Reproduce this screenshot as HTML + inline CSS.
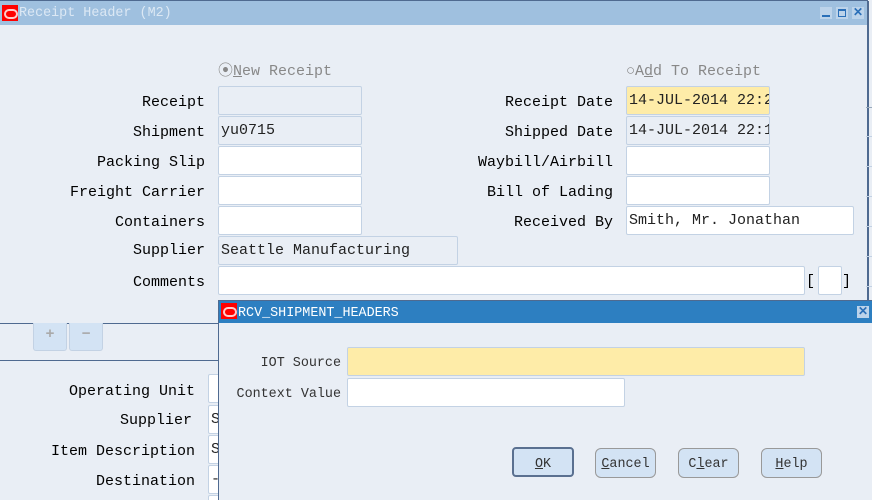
<!DOCTYPE html>
<html><head><meta charset="utf-8"><style>
*{margin:0;padding:0;box-sizing:border-box}
html,body{width:872px;height:500px;overflow:hidden}
body{background:#e9eef5;position:relative;font-family:"Liberation Mono","Noto Sans CJK SC",monospace;font-size:15px;color:#000}
.a{position:absolute}
.lbl{position:absolute;text-align:right;white-space:nowrap;line-height:16px}
.f{position:absolute;height:29px;background:#fff;border:1px solid #c3d2e4;border-radius:2px;padding:5px 2px;white-space:nowrap;overflow:hidden;line-height:18px;color:#222}
.g{background:#e9eef5}
.y{background:#feeca8}
.d{font-size:13.4px}
.btn{position:absolute;height:30px;background:#d3e3f4;border:1px solid #8fa0b8;border-radius:6px;text-align:center;line-height:32px;color:#333;font-size:13.4px}
.ico{position:absolute;width:16px;height:16px;background:#f00}
.ico:after{content:"";position:absolute;left:2px;top:4px;width:10px;height:6px;border:2px solid #fcc;border-radius:5px}
u{text-decoration:underline}
</style></head><body>
<div class="a" style="left:0;top:0;width:868px;height:1px;background:#4f6a90"></div>
<div class="a" style="left:0;top:1px;width:868px;height:24px;background:#9fc0df"></div>
<div class="ico" style="left:2px;top:5px"></div>
<div class="a" style="left:19px;top:6px;color:#dce8f4;line-height:16px;font-size:13.4px">Receipt Header (M2)</div>
<div class="a" style="left:820px;top:7px;width:12px;height:12px;background:#bcd3ea"><div class="a" style="left:2px;top:8px;width:8px;height:2px;background:#2a6fb8"></div></div>
<div class="a" style="left:836px;top:7px;width:12px;height:12px;background:#bcd3ea"><div class="a" style="left:2px;top:2px;width:8px;height:8px;border:1.5px solid #2a6fb8;border-top-width:2.5px"></div></div>
<div class="a" style="left:852px;top:7px;width:12px;height:12px;background:#bcd3ea;color:#2a6fb8;font-size:12px;line-height:12px;text-align:center;font-weight:bold">✕</div>
<div class="a" style="left:867px;top:1px;width:2px;height:300px;background:#4f6a90"></div>
<div class="a" style="left:866px;top:107px;width:6px;height:1px;background:#9ab"></div>
<div class="a" style="left:866px;top:136px;width:6px;height:1px;background:#c3d2e4"></div>
<div class="a" style="left:866px;top:166px;width:6px;height:1px;background:#c3d2e4"></div>
<div class="a" style="left:866px;top:196px;width:6px;height:1px;background:#c3d2e4"></div>
<div class="a" style="left:866px;top:226px;width:6px;height:1px;background:#c3d2e4"></div>
<div class="a" style="left:866px;top:256px;width:6px;height:1px;background:#c3d2e4"></div>
<div class="a" style="left:866px;top:286px;width:6px;height:1px;background:#c3d2e4"></div>

<div class="a" style="left:218px;top:64px;color:#888;line-height:16px">⦿<u>N</u>ew Receipt</div>
<div class="a" style="left:626px;top:64px;color:#888;line-height:16px">○A<u>d</u>d To Receipt</div>

<div class="lbl" style="right:667px;top:95px">Receipt</div>
<div class="lbl" style="right:667px;top:125px">Shipment</div>
<div class="lbl" style="right:667px;top:155px">Packing Slip</div>
<div class="lbl" style="right:667px;top:185px">Freight Carrier</div>
<div class="lbl" style="right:667px;top:215px">Containers</div>
<div class="lbl" style="right:667px;top:243px">Supplier</div>
<div class="lbl" style="right:667px;top:275px">Comments</div>

<div class="f g" style="left:218px;top:86px;width:144px"></div>
<div class="f g" style="left:218px;top:116px;width:144px">yu0715</div>
<div class="f" style="left:218px;top:146px;width:144px"></div>
<div class="f" style="left:218px;top:176px;width:144px"></div>
<div class="f" style="left:218px;top:206px;width:144px"></div>
<div class="f g" style="left:218px;top:236px;width:240px">Seattle Manufacturing</div>
<div class="f" style="left:218px;top:266px;width:587px"></div>
<div class="a" style="left:806px;top:274px;line-height:16px">[</div>
<div class="f" style="left:818px;top:266px;width:24px"></div>
<div class="a" style="left:842px;top:274px;line-height:16px">]</div>

<div class="lbl" style="right:259px;top:95px">Receipt Date</div>
<div class="lbl" style="right:259px;top:125px">Shipped Date</div>
<div class="lbl" style="right:259px;top:155px">Waybill/Airbill</div>
<div class="lbl" style="right:259px;top:185px">Bill of Lading</div>
<div class="lbl" style="right:259px;top:215px">Received By</div>
<div class="f y" style="left:626px;top:86px;width:144px">14-JUL-2014 22:2</div>
<div class="f g" style="left:626px;top:116px;width:144px">14-JUL-2014 22:1</div>
<div class="f" style="left:626px;top:146px;width:144px"></div>
<div class="f" style="left:626px;top:176px;width:144px"></div>
<div class="f" style="left:626px;top:206px;width:228px">Smith, Mr. Jonathan</div>

<div class="a" style="left:0;top:323px;width:220px;height:1px;background:#4f6a90"></div>
<div class="a" style="left:33px;top:323px;width:34px;height:28px;background:#d3e3f4;border:1px solid #c3d2e4;border-top:none;border-radius:0 0 3px 3px;color:#aaa;text-align:center;font-weight:bold;line-height:24px">+</div>
<div class="a" style="left:69px;top:323px;width:34px;height:28px;background:#d3e3f4;border:1px solid #c3d2e4;border-top:none;border-radius:0 0 3px 3px;color:#aaa;text-align:center;font-weight:bold;line-height:24px">−</div>
<div class="a" style="left:0;top:360px;width:220px;height:1px;background:#4f6a90"></div>
<div class="lbl" style="right:677px;top:384px">Operating Unit</div>
<div class="lbl" style="right:680px;top:413px">Supplier</div>
<div class="lbl" style="right:677px;top:444px">Item Description</div>
<div class="lbl" style="right:677px;top:474px">Destination</div>
<div class="f" style="left:208px;top:374px;width:20px"></div>
<div class="f" style="left:208px;top:405px;width:20px;padding-left:2px">S</div>
<div class="f" style="left:208px;top:435px;width:20px;padding-left:2px">S</div>
<div class="f" style="left:208px;top:465px;width:20px;padding-left:2px">-</div>
<div class="f" style="left:208px;top:495px;width:20px;height:5px"></div>

<div class="a" style="left:218px;top:300px;width:654px;height:200px;background:#e9eef5;border-left:1px solid #4f6a90"></div>
<div class="a" style="left:219px;top:300px;width:653px;height:23px;background:#2d7fc1;border-top:1px solid #4f6a90"></div>
<div class="ico" style="left:221px;top:303px"></div>
<div class="a d" style="left:238px;top:306px;color:#fff;line-height:16px">RCV_SHIPMENT_HEADERS</div>
<div class="a" style="left:857px;top:306px;width:12px;height:12px;background:#bcd3ea;color:#2a6fb8;font-size:12px;line-height:12px;text-align:center;font-weight:bold">✕</div>

<div class="lbl d" style="right:531px;top:356px;color:#333">IOT Source</div>
<div class="lbl d" style="right:531px;top:387px;color:#333">Context Value</div>
<div class="f y" style="left:347px;top:347px;width:458px"></div>
<div class="f" style="left:347px;top:378px;width:278px"></div>

<div class="btn" style="left:512px;top:447px;width:62px;border:2px solid #5a7090;border-radius:4px"><u>O</u>K</div>
<div class="btn" style="left:595px;top:448px;width:61px;border-color:#999"><u>C</u>ancel</div>
<div class="btn" style="left:678px;top:448px;width:61px;border-color:#999">C<u>l</u>ear</div>
<div class="btn" style="left:761px;top:448px;width:61px;border-color:#999"><u>H</u>elp</div>
</body></html>
